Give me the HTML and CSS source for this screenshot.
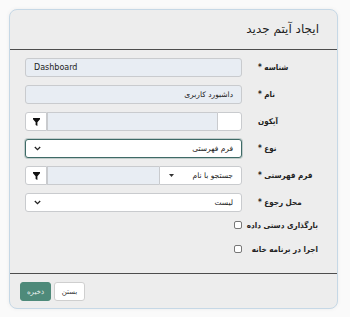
FILE: index.html
```html
<!DOCTYPE html>
<html lang="fa" dir="rtl">
<head>
  <meta charset="UTF-8" />
  <title>ایجاد آیتم جدید</title>
  <link rel="stylesheet" href="styles.css">
</head>
<body>
  <div class="modal">
    <div class="modal-header">
      <h3>ایجاد آیتم جدید</h3>
    </div>

    <div class="modal-body">
      <div class="row">
        <label>شناسه *</label>
        <div class="field">
          <div class="ctl ro ltr">Dashboard</div>
        </div>
      </div>

      <div class="row">
        <label>نام *</label>
        <div class="field">
          <div class="ctl ro">داشبورد کاربری</div>
        </div>
      </div>

      <div class="row">
        <label>آیکون</label>
        <div class="field group">
          <div class="addon preview"></div>
          <div class="ctl ro grow"></div>
          <button class="addon btn-filter">
            <svg width="7" height="8" viewBox="0 0 7 8"><path d="M0 0h7v1.3L4.4 4.2V8L2.6 7V4.2L0 1.3z" fill="#111"/></svg>
          </button>
        </div>
      </div>

      <div class="row">
        <label>نوع *</label>
        <div class="field">
          <div class="ctl select focus">
            <span>فرم فهرستی</span>
            <svg width="7" height="5" viewBox="0 0 7 5"><path d="M0.8 1l2.7 2.6L6.2 1" fill="none" stroke="#222" stroke-width="1.3"/></svg>
          </div>
        </div>
      </div>

      <div class="row">
        <label>فرم فهرستی *</label>
        <div class="field group">
          <div class="ctl select mini">
            <span>جستجو با نام</span>
            <svg width="5" height="3" viewBox="0 0 5 3"><path d="M0 0h5L2.5 3z" fill="#333"/></svg>
          </div>
          <div class="ctl ro grow"></div>
          <button class="addon btn-filter">
            <svg width="7" height="8" viewBox="0 0 7 8"><path d="M0 0h7v1.3L4.4 4.2V8L2.6 7V4.2L0 1.3z" fill="#111"/></svg>
          </button>
        </div>
      </div>

      <div class="row">
        <label>محل رجوع *</label>
        <div class="field">
          <div class="ctl select">
            <span>لیست</span>
            <svg width="7" height="5" viewBox="0 0 7 5"><path d="M0.8 1l2.7 2.6L6.2 1" fill="none" stroke="#222" stroke-width="1.3"/></svg>
          </div>
        </div>
      </div>

      <div class="row check-row">
        <label>بارگذاری دستی داده</label>
        <div class="field"><input type="checkbox"></div>
      </div>

      <div class="row check-row">
        <label>اجرا در برنامه خانه</label>
        <div class="field"><input type="checkbox"></div>
      </div>
    </div>

    <div class="modal-footer">
      <button class="btn">بستن</button>
      <button class="btn btn-green">ذخیره</button>
    </div>
  </div>
</body>
</html>
```

FILE: styles.css
```css
* {
  box-sizing: border-box;
  margin: 0;
  padding: 0;
}

html, body {
  background: #fafafa;
  font-family: 'DejaVu Sans', 'Noto Sans', sans-serif;
  color: #222;
}

body {
  padding: 9px 12px 8px 9px;
}

.modal {
  background: #ededed;
  border: 1px solid #c6d8e6;
  border-radius: 8px;
  box-shadow: 0 0 4px rgba(0,0,0,0.06);
  overflow: hidden;
}

.modal-header {
  height: 40px;
  border-bottom: 1px solid #4d4d4d;
  display: flex;
  align-items: center;
  padding: 0 18px 2px;
}

.modal-header h3 {
  font-size: 12px;
  font-weight: normal;
  color: #1e1e1e;
}

.modal-body {
  padding: 8px 19px 19px 15px;
}

.row {
  display: flex;
  align-items: center;
  gap: 16px;
  height: 19px;
  margin-bottom: 8px;
}

.row label {
  width: 60px;
  flex: none;
  text-align: left;
  font-family: 'DejaVu Sans Condensed', 'DejaVu Sans', sans-serif;
  font-size: 8px;
  font-weight: bold;
  white-space: nowrap;
}

.field {
  width: 217px;
  height: 100%;
  display: flex;
  align-items: center;
}

.ctl {
  width: 100%;
  height: 19px;
  border: 1px solid #c9cbce;
  border-radius: 3px;
  background: #fff;
  font-size: 7.5px;
  display: flex;
  align-items: center;
  padding: 0 8px;
  white-space: nowrap;
}

.ro {
  background: #e8edf3;
}

.ltr {
  direction: ltr;
  font-size: 8px;
}

.select {
  justify-content: space-between;
}

.select.focus {
  border-color: #3e6a66;
  box-shadow: 0 0 0 1px rgba(62,106,102,0.25);
}

.group .ctl, .group .addon {
  border-radius: 0;
}

.group > :first-child {
  border-radius: 0 3px 3px 0;
}

.group > :last-child {
  border-radius: 3px 0 0 3px;
}

.group .grow {
  flex: 1;
  width: auto;
  border-right: none;
}

.addon {
  height: 19px;
  background: #fff;
  border: 1px solid #c9cbce;
  flex: none;
}

.preview {
  width: 25px;
}

.btn-filter {
  width: 22px;
  display: flex;
  align-items: center;
  justify-content: center;
  border-right: 1px solid #c9cbce;
}

.select.mini {
  width: 83px;
  flex: none;
  padding: 0 8px 0 9px;
}

.check-row {
  height: 10px;
  margin-bottom: 14px;
}

.check-row:last-child {
  margin-bottom: 0;
}

/* long labels spill into the gap, checkbox stays put */
.check-row input {
  appearance: none;
  width: 8px;
  height: 8px;
  border: 1px solid #777;
  border-radius: 2px;
  background: #fff;
}

.modal-footer {
  border-top: 1px solid #4d4d4d;
  display: flex;
  justify-content: flex-end;
  gap: 3px;
  padding: 8px 10px 7px;
}

.btn {
  height: 19px;
  width: 31px;
  border: 1px solid #cfcfcf;
  border-radius: 3px;
  background: #fff;
  font-family: inherit;
  font-size: 7px;
  color: #333;
}

.btn-green {
  background: #4e8a7a;
  border-color: #4e8a7a;
  color: #e8f1ee;
}
```
